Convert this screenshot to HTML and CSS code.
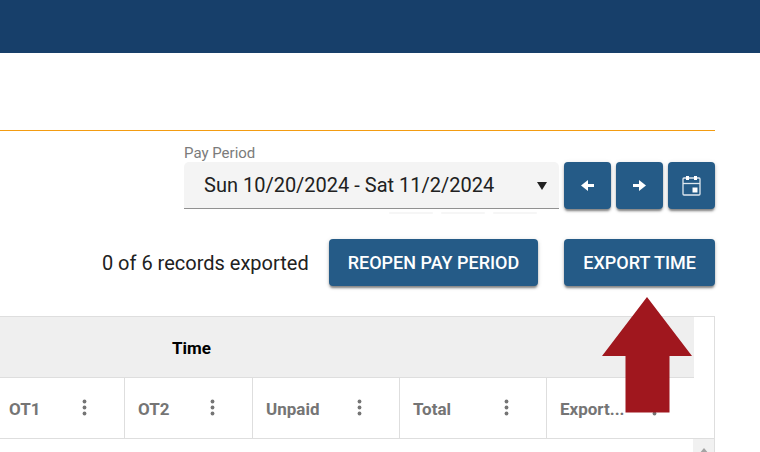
FILE: index.html
```html
<!DOCTYPE html>
<html lang="en">
<head>
    <meta charset="UTF-8">
    <meta name="viewport" content="width=device-width, initial-scale=1.0">
    <title>Export Time</title>
    <link rel="stylesheet" href="styles.css">
</head>
<body>
    <header class="top-bar"></header>
    <main class="content">
        <div class="period-bar">
            <div class="period-field">
                <label for="payPeriod">Pay Period</label>
                <div class="select-box">
                    <select id="payPeriod">
                        <option>Sun 10/20/2024 - Sat 11/2/2024</option>
                    </select>
                    <div class="select-shade"><span></span><span></span><span></span></div>
                </div>
            </div>
            <button class="btn btn-icon" type="button" aria-label="Previous pay period">
                <svg width="13" height="11" viewBox="0 0 13 11"><path d="M0 5.5 7 0v4h6v3H7v4z" fill="#fff"/></svg>
            </button>
            <button class="btn btn-icon" type="button" aria-label="Next pay period">
                <svg width="13" height="11" viewBox="0 0 13 11"><path d="M13 5.5 6 0v4H0v3h6v4z" fill="#fff"/></svg>
            </button>
            <button class="btn btn-icon" type="button" aria-label="Choose date">
                <svg width="19" height="20" viewBox="0 0 19 20">
                    <rect x="1" y="2" width="17" height="17" rx="1" fill="none" stroke="#dfe8ef" stroke-width="1.3"/>
                    <path d="M1 7.500h17" stroke="#dfe8ef" stroke-width="1.3"/>
                    <path d="M4 0h3v4H4zM12 0h3v4h-3zM10.500 11.500h5v5h-5z" fill="#fff"/>
                </svg>
            </button>
        </div>

        <div class="actions">
            <span class="status">0 of 6 records exported</span>
            <button class="btn" type="button">REOPEN PAY PERIOD</button>
            <div class="export">
                <button class="btn" type="button">EXPORT TIME</button>
                <svg class="pointer" width="91" height="117" viewBox="0 0 91 117">
                    <path d="M45 1 90 60H67.500v56.500H23.500V60H0z" fill="#a0171e"/>
                </svg>
            </div>
        </div>

        <div class="grid">
            <div class="grid-header">
                <table>
                    <colgroup>
                        <col class="col-small">
                        <col class="col-small">
                        <col class="col-large">
                        <col class="col-large">
                        <col class="col-large">
                    </colgroup>
                    <thead>
                        <tr class="group-row">
                            <th colspan="5">Time</th>
                        </tr>
                        <tr class="column-row">
                            <th><div class="cell"><span>OT1</span><button class="menu" type="button" aria-label="OT1 menu"><svg width="5" height="17" viewBox="0 0 5 17"><circle cx="2.500" cy="2.500" r="1.900"/><circle cx="2.500" cy="8.500" r="1.900"/><circle cx="2.500" cy="14.500" r="1.900"/></svg></button></div></th>
                            <th><div class="cell"><span>OT2</span><button class="menu" type="button" aria-label="OT2 menu"><svg width="5" height="17" viewBox="0 0 5 17"><circle cx="2.500" cy="2.500" r="1.900"/><circle cx="2.500" cy="8.500" r="1.900"/><circle cx="2.500" cy="14.500" r="1.900"/></svg></button></div></th>
                            <th><div class="cell"><span>Unpaid</span><button class="menu" type="button" aria-label="Unpaid menu"><svg width="5" height="17" viewBox="0 0 5 17"><circle cx="2.500" cy="2.500" r="1.900"/><circle cx="2.500" cy="8.500" r="1.900"/><circle cx="2.500" cy="14.500" r="1.900"/></svg></button></div></th>
                            <th><div class="cell"><span>Total</span><button class="menu" type="button" aria-label="Total menu"><svg width="5" height="17" viewBox="0 0 5 17"><circle cx="2.500" cy="2.500" r="1.900"/><circle cx="2.500" cy="8.500" r="1.900"/><circle cx="2.500" cy="14.500" r="1.900"/></svg></button></div></th>
                            <th><div class="cell"><span>Export...</span><button class="menu" type="button" aria-label="Export menu"><svg width="5" height="17" viewBox="0 0 5 17"><circle cx="2.500" cy="2.500" r="1.900"/><circle cx="2.500" cy="8.500" r="1.900"/><circle cx="2.500" cy="14.500" r="1.900"/></svg></button></div></th>
                        </tr>
                    </thead>
                </table>
            </div>
            <div class="grid-body">
                <div class="scrollbar">
                    <svg width="10" height="6" viewBox="0 0 10 6"><path d="M5 0l5 6H0z" fill="#a3a3a3"/></svg>
                </div>
            </div>
        </div>
    </main>
</body>
</html>
```

FILE: styles.css
```css
* {
    box-sizing: border-box;
}
html, body {
    height: 100%;
}
body {
    font-family: Roboto, sans-serif;
    margin: 0;
    display: flex;
    flex-direction: column;
    overflow: hidden;
    background-color: #fff;
    color: #212121;
}
.top-bar {
    flex: none;
    height: 53px;
    background-color: #173f6a;
}
.content {
    flex: 1;
    display: flex;
    flex-direction: column;
    padding: 77px 45px 0 0;
}
.period-bar {
    display: flex;
    justify-content: flex-end;
    align-items: flex-end;
    gap: 5px;
    padding-top: 13px;
    border-top: 1px solid #f39c12;
}
.period-field {
    width: 375px;
}
.period-field label {
    display: block;
    font-size: 15px;
    line-height: 18px;
    color: #7b7b7b;
}
.select-box {
    position: relative;
}
.select-box select {
    appearance: none;
    display: block;
    width: 100%;
    height: 47px;
    padding: 0 40px 0 20px;
    border: none;
    border-bottom: 1px solid #919191;
    border-radius: 5px 5px 0 0;
    background-color: #f4f4f4;
    color: #212121;
    font-family: inherit;
    font-size: 20px;
}
.select-box::after {
    content: "";
    position: absolute;
    right: 12px;
    top: 20px;
    border: 5px solid transparent;
    border-top: 8px solid #212121;
    border-bottom: none;
    pointer-events: none;
}
.select-shade {
    position: absolute;
    top: 50px;
    right: 22px;
    display: flex;
    gap: 8px;
}
.select-shade span {
    width: 44px;
    height: 2px;
    border-radius: 2px;
    background-color: #f6f6f6;
}
.btn {
    display: flex;
    align-items: center;
    justify-content: center;
    height: 47px;
    padding: 0 19px;
    border: none;
    border-radius: 4px;
    background-color: #255b87;
    color: #fff;
    font-family: inherit;
    font-size: 18px;
    font-weight: 500;
    white-space: nowrap;
    cursor: pointer;
    box-shadow: 0 3px 2px -1px rgba(0, 0, 0, 0.3), 0 2px 3px rgba(0, 0, 0, 0.2), 0 1px 5px rgba(0, 0, 0, 0.12);
}
.btn-icon {
    width: 47px;
    padding: 0;
}
.actions {
    display: flex;
    justify-content: flex-end;
    align-items: center;
    margin: 30px 0;
}
.status {
    margin-right: 20px;
    font-size: 20px;
}
.export {
    position: relative;
    margin-left: 26px;
}
.pointer {
    position: absolute;
    top: 57px;
    right: 22px;
    z-index: 1;
}
.grid {
    flex: 1;
    display: flex;
    flex-direction: column;
    border: 1px solid #dedede;
    border-width: 1px 1px 0 0;
}
.grid-header {
    padding-right: 20px;
    border-bottom: 1px solid #dedede;
}
.grid table {
    width: 100%;
    table-layout: fixed;
    border-collapse: separate;
    border-spacing: 0;
    font-size: 17px;
}
.col-small {
    width: 128px;
}
.col-large {
    width: 147px;
}
.col-small:first-child {
    width: 125px;
}
.group-row th {
    height: 61px;
    padding: 2px 0 0 172px;
    border-bottom: 1px solid #dedede;
    background-color: #efefef;
    color: #000;
    text-align: left;
}
.column-row th {
    height: 60px;
    padding: 2px 37px 0 13px;
    border-right: 1px solid #dedede;
    color: #757575;
    text-align: left;
}
.column-row th:first-child {
    padding-left: 9px;
}
.column-row th:last-child {
    border-right: none;
}
.cell {
    display: flex;
    align-items: center;
    justify-content: space-between;
}
.menu {
    display: flex;
    padding: 0 0 4px;
    border: none;
    background: none;
    cursor: pointer;
}
.menu svg {
    fill: #757575;
}
.grid-body {
    flex: 1;
    display: flex;
    justify-content: flex-end;
}
.scrollbar {
    display: flex;
    justify-content: center;
    width: 21px;
    padding-top: 9px;
    background-color: #f1f1f1;
}
```
